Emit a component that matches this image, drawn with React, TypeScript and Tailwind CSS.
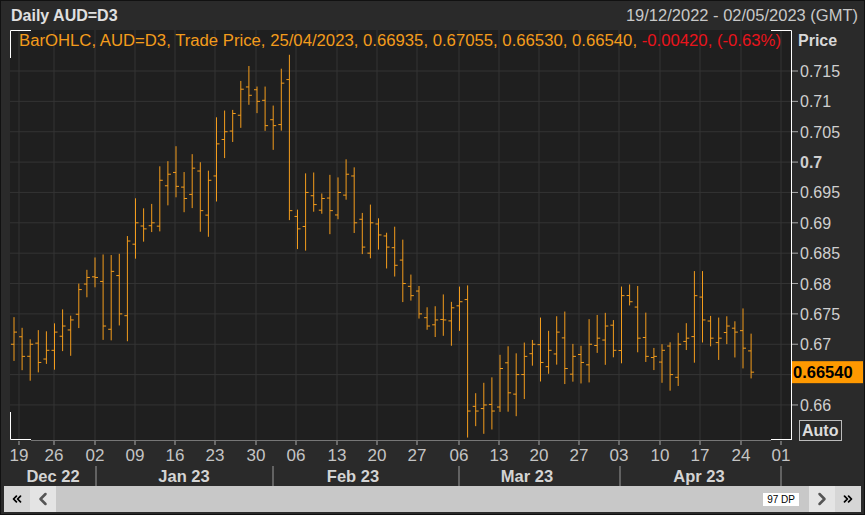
import React from 'react';
import { ChevronLeft, ChevronRight, ChevronsLeft, ChevronsRight } from 'lucide-react';

const closes = [
  0.672, 0.668, 0.670, 0.667, 0.669,
  0.672, 0.673, 0.674, 0.679, 0.681,
  0.681, 0.673, 0.682, 0.675, 0.687,
  0.690, 0.689, 0.690, 0.697, 0.698,
  0.696, 0.694, 0.699, 0.692, 0.697,
  0.703, 0.705, 0.708, 0.712, 0.711,
  0.710, 0.706, 0.706, 0.713, 0.692,
  0.689, 0.695, 0.693, 0.694, 0.692,
  0.695, 0.698, 0.690, 0.686, 0.690,
  0.688, 0.686, 0.683, 0.680, 0.678,
  0.675, 0.673, 0.674, 0.674, 0.676,
  0.677, 0.659, 0.659, 0.660, 0.659,
  0.666, 0.662, 0.665, 0.668, 0.670,
  0.667, 0.669, 0.672, 0.666, 0.668,
  0.667, 0.670, 0.671, 0.673, 0.669,
  0.678, 0.677, 0.671, 0.668, 0.668,
  0.669, 0.665, 0.670, 0.671, 0.678,
  0.674, 0.671, 0.671, 0.673, 0.672,
  0.66935, 0.6654,
];

let seed = 7;
const rnd = () => {
  seed = (seed * 9301 + 49297) % 233280;
  return seed / 233280;
};

const bars = closes.map((c, i) => {
  const o = i === 0 ? 0.670 : closes[i - 1] + (rnd() - 0.5) * 0.002;
  const h = Math.max(o, c) + rnd() * 0.004 + 0.0005;
  const l = Math.min(o, c) - rnd() * 0.004 - 0.0005;
  return { o, h, l, c };
});

const py = (p: number) => 41 + ((0.715 - p) / 0.005) * 30.36;
const bx = (i: number) => 13 + i * 8.1;

const prices = [0.715, 0.71, 0.705, 0.7, 0.695, 0.69, 0.685, 0.68, 0.675, 0.67, 0.66];
const days = [
  ['19', 18], ['26', 53], ['02', 94], ['09', 134], ['16', 174], ['23', 214], ['30', 255],
  ['06', 295], ['13', 336], ['20', 376], ['27', 416], ['06', 458], ['13', 498], ['20', 538],
  ['27', 578], ['03', 618], ['10', 659], ['17', 699], ['24', 740], ['01', 780],
] as const;
const months = [['Dec 22', 52], ['Jan 23', 183], ['Feb 23', 352], ['Mar 23', 526], ['Apr 23', 698]] as const;
const seps = [95, 272, 458, 619, 780];

const font = '"Liberation Sans", "Noto Sans", sans-serif';

export default function App() {
  return (
    <div className="w-[865px] h-[515px] bg-[#2a2a2a] border border-[#111] flex flex-col overflow-hidden" style={{ fontFamily: font }}>
      <div className="h-[29px] flex items-center justify-between pl-[10px] pr-[6px] shrink-0">
        <span className="text-[#e0e0e0] font-bold text-[16px]">Daily AUD=D3</span>
        <span className="text-[#c8c8c8] text-[16.5px]">19/12/2022 - 02/05/2023 (GMT)</span>
      </div>
      <svg width="865" height="456" className="shrink-0 block" fontFamily={font}>
        <rect x="9" y="0" width="782" height="410" fill="#1f1f1f" />
        {prices.map((p) => (
          <line key={p} x1="9" x2="791" y1={py(p)} y2={py(p)} stroke="#343434" />
        ))}
        <line x1="9" x2="791" y1={py(0.665)} y2={py(0.665)} stroke="#343434" />
        {days.map(([, x], i) => (
          <line key={i} x1={x} x2={x} y1="0" y2="410" stroke="#343434" />
        ))}
        {bars.map((b, i) => {
          const x = bx(i);
          return (
            <g key={i} stroke="#f39c1c" strokeWidth="1">
              <line x1={x} x2={x} y1={py(b.h)} y2={py(b.l)} />
              <line x1={x - 3} x2={x} y1={py(b.o)} y2={py(b.o)} />
              <line x1={x} x2={x + 3} y1={py(b.c)} y2={py(b.c)} />
            </g>
          );
        })}
        <path d="M9.5 28 V0.5 H30" stroke="#fff" fill="none" />
        <path d="M770 0.5 H790.5 V410" stroke="#fff" fill="none" />
        <path d="M9.5 382 V409.5 H30" stroke="#fff" fill="none" />
        <line x1="30" x2="770" y1="410.5" y2="410.5" stroke="#777" />
        <path d="M770 409.5 H790.5" stroke="#fff" fill="none" />
        <text x="18" y="16" fontSize="16" fill="#f39c1c" textLength="762" lengthAdjust="spacingAndGlyphs">
          BarOHLC, AUD=D3, Trade Price, 25/04/2023, 0.66935, 0.67055, 0.66530, 0.66540,{' '}
          <tspan fill="#e8141c">-0.00420, (-0.63%)</tspan>
        </text>
        <text x="797" y="16" fontSize="16" fontWeight="bold" fill="#d8d8d8">Price</text>
        {prices.map((p) => (
          <g key={p}>
            <line x1="791" x2="797" y1={py(p)} y2={py(p)} stroke="#aaa" />
            <text x="799" y={py(p) + 6} fontSize="16" fill="#cfcfcf" fontWeight={p === 0.7 ? 'bold' : 'normal'}>
              {p === 0.7 ? '0.7' : p.toString()}
            </text>
          </g>
        ))}
        <rect x="791" y={py(0.6654) - 11} width="71" height="22" fill="#ff9900" />
        <text x="792" y={py(0.6654) + 6} fontSize="16.5" fontWeight="bold" fill="#000">0.66540</text>
        <rect x="798.5" y="390.5" width="42" height="20" fill="none" stroke="#bbb" />
        <text x="801" y="406" fontSize="16" fontWeight="bold" fill="#dcdcdc">Auto</text>
        {days.map(([d, x], i) => (
          <g key={i}>
            <line x1={x} x2={x} y1="411" y2="415" stroke="#aaa" />
            <text x={x} y="431" fontSize="17" fill="#c4c4c4" textAnchor="middle">{d}</text>
          </g>
        ))}
        {seps.map((x) => (
          <line key={x} x1={x} x2={x} y1="436" y2="456" stroke="#9a9a9a" />
        ))}
        {months.map(([m, x]) => (
          <text key={m} x={x} y="452" fontSize="16.5" fontWeight="bold" fill="#d4d4d4" textAnchor="middle">{m}</text>
        ))}
      </svg>
      <div className="h-[26px] bg-[#c8c8c8] flex items-center text-black shrink-0 mx-[3px]">
        <div className="w-[26px] h-full bg-[#d6d6d6] flex items-center justify-center">
          <ChevronsLeft size={14} strokeWidth={3} />
        </div>
        <div className="w-[26px] h-full bg-[#e4e4e4] flex items-center justify-center text-[#555]">
          <ChevronLeft size={20} strokeWidth={3} />
        </div>
        <div className="flex-1" />
        <div className="bg-white text-[10px] px-[4px] leading-[13px] mr-[10px]">97 DP</div>
        <div className="w-[26px] h-full bg-[#e4e4e4] flex items-center justify-center text-[#555]">
          <ChevronRight size={20} strokeWidth={3} />
        </div>
        <div className="w-[26px] h-full bg-[#d6d6d6] flex items-center justify-center">
          <ChevronsRight size={14} strokeWidth={3} />
        </div>
      </div>
    </div>
  );
}
